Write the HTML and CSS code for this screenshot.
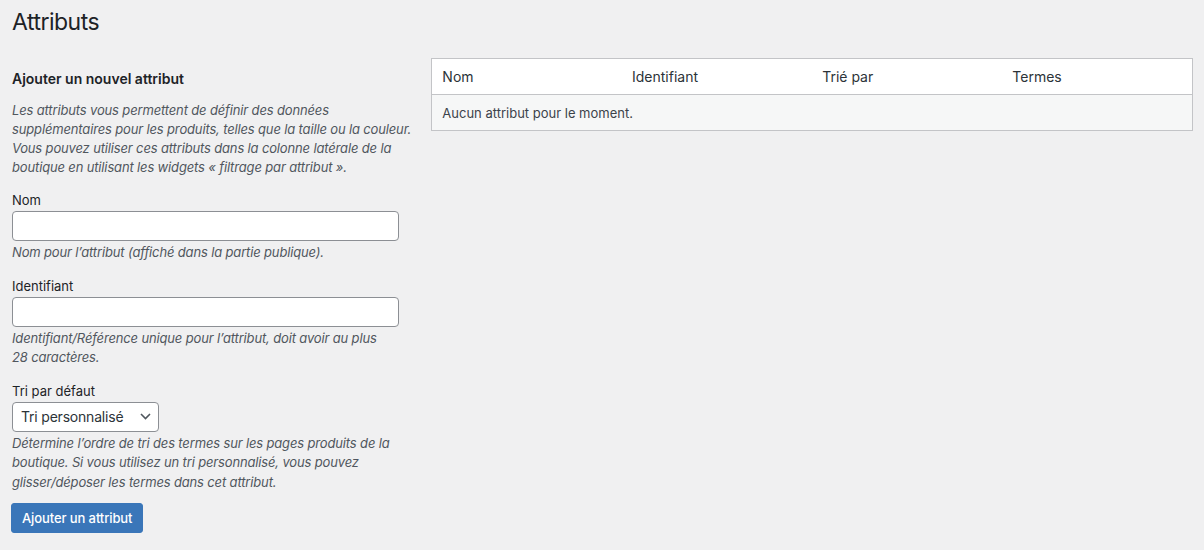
FILE: index.html
```html
<!DOCTYPE html>
<html lang="fr">
<head>
<meta charset="utf-8">
<title>Attributs</title>
<link rel="stylesheet" href="styles.css">
</head>
<body>
<div class="wrap">
  <h1 class="page-title">Attributs</h1>
  <div class="cols">
    <div class="col-left">
      <div class="col-wrap">
        <h2 class="form-title">Ajouter un nouvel attribut</h2>
        <p class="intro">Les attributs vous permettent de définir des données supplémentaires pour les produits, telles que la taille ou la couleur. Vous pouvez utiliser ces attributs dans la colonne latérale de la boutique en utilisant les widgets « filtrage par attribut ».</p>
        <div class="field">
          <label class="label" for="name">Nom</label>
          <input class="text-input" id="name" type="text">
          <p class="desc">Nom pour l’attribut (affiché dans la partie publique).</p>
        </div>
        <div class="field">
          <label class="label" for="slug">Identifiant</label>
          <input class="text-input" id="slug" type="text">
          <p class="desc">Identifiant/Référence unique pour l’attribut, doit avoir au plus 28 caractères.</p>
        </div>
        <div class="field">
          <label class="label" for="orderby">Tri par défaut</label>
          <div class="select">
            <span class="select-value">Tri personnalisé</span>
            <svg class="chevron" width="11" height="7" viewBox="0 0 11 7"><path d="M1 1l4.5 4.5L10 1" fill="none" stroke="#50575e" stroke-width="1.6"/></svg>
          </div>
          <p class="desc">Détermine l’ordre de tri des termes sur les pages produits de la boutique. Si vous utilisez un tri personnalisé, vous pouvez glisser/déposer les termes dans cet attribut.</p>
        </div>
        <button class="button-primary" type="button">Ajouter un attribut</button>
      </div>
    </div>
    <div class="col-right">
      <div class="col-wrap">
        <table class="attr-table">
          <thead>
            <tr><th>Nom</th><th>Identifiant</th><th>Trié par</th><th>Termes</th></tr>
          </thead>
          <tbody>
            <tr><td colspan="4">Aucun attribut pour le moment.</td></tr>
          </tbody>
        </table>
      </div>
    </div>
  </div>
</div>
</body>
</html>
```

FILE: styles.css
```css
* { box-sizing: border-box; }
html, body {
  margin: 0;
  background: #f0f0f1;
  color: #1d2327;
  font-family: Inter, "Noto Sans", "Liberation Sans", sans-serif;
  font-size: 13px;
}
.wrap {
  padding: 0 11px 0 12px;
}
.page-title {
  margin: 0;
  padding: 7px 0 4px;
  font-size: 23px;
  font-weight: 400;
  line-height: 30px;
  letter-spacing: -0.5px;
  color: #1d2327;
}
.cols {
  display: flex;
  margin-top: 17px;
}
.col-left { width: 35%; }
.col-right { width: 65%; }
.col-left .col-wrap { padding-right: 6px; }
.col-right .col-wrap { padding-left: 6px; }

.form-title {
  margin: 11px 0 0;
  font-size: 14px;
  font-weight: 600;
  line-height: 20px;
}
.intro {
  margin: 12px 0 0;
  font-style: italic;
  color: #50575e;
  line-height: 19px;
  letter-spacing: -0.15px;
}
.field {
  margin-top: 14px;
  display: flex;
  flex-direction: column;
  align-items: flex-start;
}
.label {
  line-height: 19px;
  margin-bottom: 1px;
}
.text-input {
  width: 95%;
  height: 30px;
  border: 1px solid #8c8f94;
  border-radius: 4px;
  background: #fff;
  padding: 0 8px;
  margin: 0;
  font: inherit;
}
.desc {
  margin: 2px 0 0;
  font-style: italic;
  color: #50575e;
  line-height: 19.5px;
  letter-spacing: -0.15px;
  width: 94%;
}
.select {
  width: 147px;
  height: 30px;
  border: 1px solid #8c8f94;
  border-radius: 4px;
  background: #fff;
  display: flex;
  align-items: center;
  justify-content: space-between;
  padding: 0 7px 0 8px;
  font-size: 14px;
  letter-spacing: -0.2px;
  color: #2c3338;
}
.chevron { flex: none; }
.button-primary {
  margin: 11px 0 0 -1px;
  height: 30px;
  padding: 0 10px;
  background: #3a76b9;
  border: 1px solid #3a76b9;
  border-radius: 3px;
  color: #fff;
  font: inherit;
  font-size: 13px;
  font-weight: 500;
  letter-spacing: -0.1px;
}

.attr-table {
  width: 100%;
  border-collapse: collapse;
  table-layout: fixed;
  border: 1px solid #c3c4c7;
  background: #fff;
}
.attr-table th {
  text-align: left;
  font-weight: 400;
  font-size: 14px;
  color: #2c3338;
  padding: 0 10px;
  height: 36px;
  border-bottom: 1px solid #c3c4c7;
}
.attr-table td {
  background: #f6f7f7;
  color: #3c434a;
  padding: 0 10px;
  height: 36px;
}
```
